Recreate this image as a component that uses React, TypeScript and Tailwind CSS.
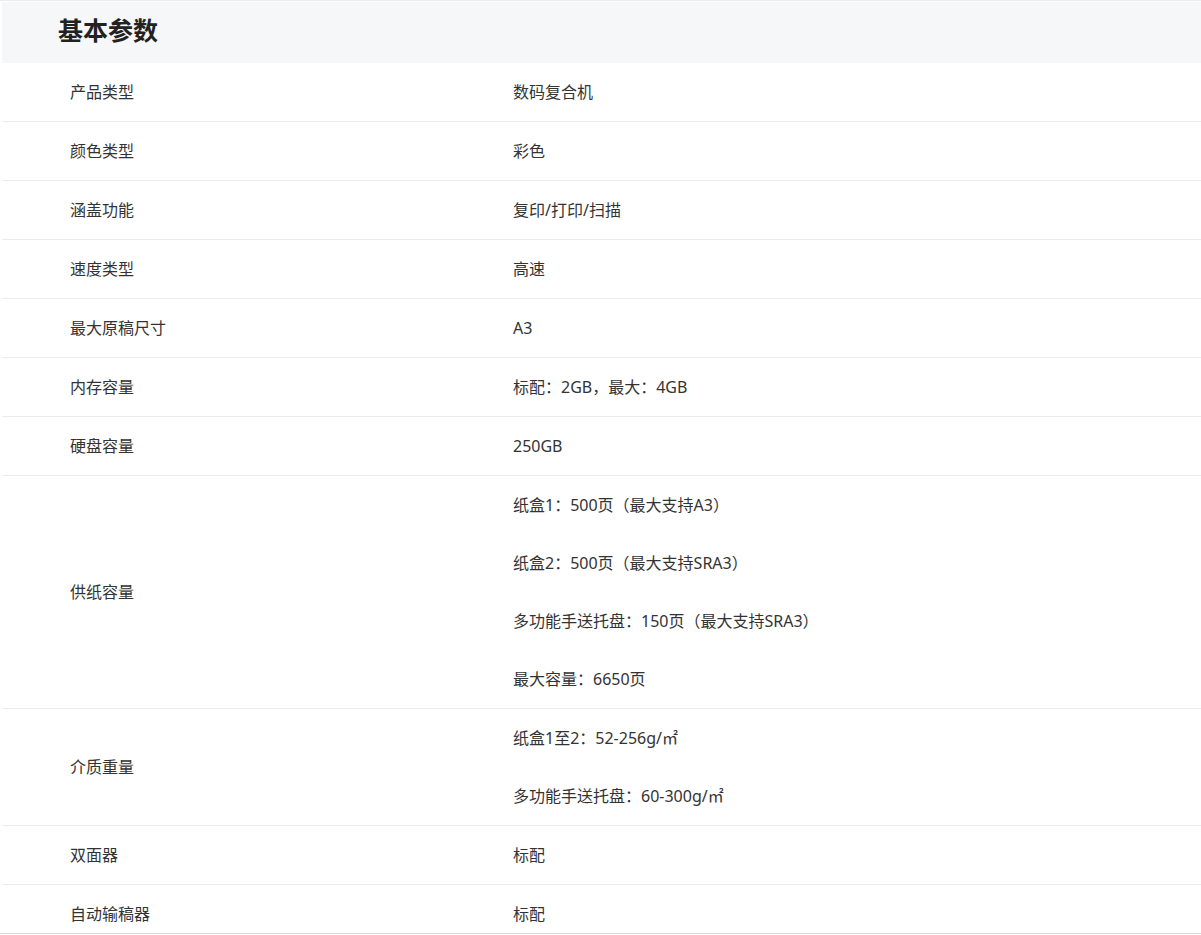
import React from "react";

const rows: { label: string; values: string[] }[] = [
  { label: "产品类型", values: ["数码复合机"] },
  { label: "颜色类型", values: ["彩色"] },
  { label: "涵盖功能", values: ["复印/打印/扫描"] },
  { label: "速度类型", values: ["高速"] },
  { label: "最大原稿尺寸", values: ["A3"] },
  { label: "内存容量", values: ["标配：2GB，最大：4GB"] },
  { label: "硬盘容量", values: ["250GB"] },
  {
    label: "供纸容量",
    values: [
      "纸盒1：500页（最大支持A3）",
      "纸盒2：500页（最大支持SRA3）",
      "多功能手送托盘：150页（最大支持SRA3）",
      "最大容量：6650页",
    ],
  },
  { label: "介质重量", values: ["纸盒1至2：52-256g/㎡", "多功能手送托盘：60-300g/㎡"] },
  { label: "双面器", values: ["标配"] },
  { label: "自动输稿器", values: ["标配"] },
];

export default function App() {
  return (
    <div
      className="w-[1201px] h-[934px] overflow-hidden border-b border-[#dcdcdc] bg-white text-[#333]"
      style={{ fontFamily: '"Noto Sans", "Noto Sans CJK SC", sans-serif' }}
    >
      <div className="h-[2px] border-t border-[#ebebeb]" />
      <div className="ml-[2px]">
        <div className="h-[61px] bg-[#f6f7f9] flex items-center pl-[56px] pb-[4px]">
          <h2 className="text-[25px] font-bold text-[#222] leading-none">基本参数</h2>
        </div>
        {rows.map((r, i) => (
          <div
            key={i}
            className={`flex text-[16px] ${i < rows.length - 1 ? "border-b border-[#ebebeb]" : ""}`}
          >
            <div className="w-[511px] shrink-0 pl-[68px] flex items-center">{r.label}</div>
            <div className="flex-1 flex flex-col">
              {r.values.map((v, j) => (
                <div key={j} className="h-[58px] flex items-center">
                  {v}
                </div>
              ))}
            </div>
          </div>
        ))}
      </div>
    </div>
  );
}
